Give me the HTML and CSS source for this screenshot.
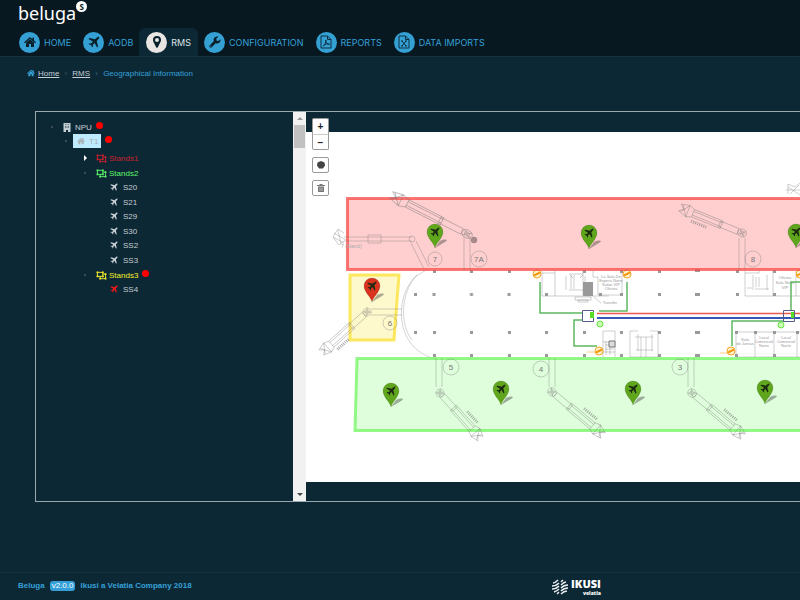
FILE: index.html
```html
<!DOCTYPE html>
<html lang="en">
<head>
    <meta charset="UTF-8">
    <meta name="viewport" content="width=device-width, initial-scale=1.0">
    <title>Beluga - Geographical Information</title>
    <link rel="stylesheet" href="styles.css">
</head>
<body>
    <!-- shared icons -->
    <svg class="defs" width="0" height="0">
        <symbol id="plane" viewBox="0 0 24 24">
            <path d="M20.5 1.5c1.300-.5 2.500.7 2 2-.4 1.500-1.300 2.700-2.300 3.700L17.500 10l2.700 11-2 2-5-8.800-3.700 3.600.5 3.400-1.500 1.500-2.300-4.400-4.900-2.500L2.800 14.300l3.400.5 3.600-3.700L1 6l2-2 11 2.600 2.800-2.800c1-1 2.200-1.900 3.700-2.300z"/>
        </symbol>
        <symbol id="house" viewBox="0 0 24 24">
            <path d="M12 2L0 12.500 1.800 14.300 12 5.500 22.200 14.300 24 12.500 20 9V3h-3v3.400zM12 6.500L4 13.500V22h6v-6h4v6h6v-8.500z"/>
        </symbol>
        <symbol id="group" viewBox="0 0 24 20">
            <path fill="none" stroke="currentColor" stroke-width="2" d="M3 3h12v9H3zM15 7h6v10H9v-5"/>
            <path d="M1 1h4v4H1zM13 1h4v4h-4zM1 10h4v4H1zM13 10h4v4h-4zM19 5h4v4h-4zM19 15h4v4h-4zM7 15h4v4H7z"/>
        </symbol>
        <symbol id="building" viewBox="0 0 16 18">
            <path fill-rule="evenodd" d="M1 0h14v18h-5v-4H6v4H1zM4 3v1h2V3zm3 0v1h2V3zm3 0v1h2V3zM4 6v1h2V6zm3 0v1h2V6zm3 0v1h2V6zM4 9v1h2V9zm3 0v1h2V9zm3 0v1h2V9z"/>
        </symbol>
    </svg>

    <header class="header">
        <a class="logo" href="#">beluga<span class="logo-s">S</span></a>
        <nav class="nav">
            <a href="#" class="nav-item">
                <span class="circle"><svg width="12" height="12"><use href="#house"/></svg></span>HOME
            </a>
            <a href="#" class="nav-item">
                <span class="circle"><svg width="12" height="12"><use href="#plane"/></svg></span>AODB
            </a>
            <a href="#" class="nav-item active">
                <span class="circle"><svg width="8" height="12" viewBox="0 0 14 21"><path fill-rule="evenodd" d="M7 0a7 7 0 0 1 7 7c0 4-3 6-5 12-1 2.600-3 2.600-4 0C3 13 0 11 0 7a7 7 0 0 1 7-7zm0 3.500a3.500 3.500 0 1 0 0 7 3.500 3.500 0 0 0 0-7z"/></svg></span>RMS
            </a>
            <a href="#" class="nav-item">
                <span class="circle"><svg width="12" height="12" viewBox="0 0 24 24"><path fill-rule="evenodd" d="M23 6.500c1 4-2.500 8.500-7 8.500-1 0-1.800-.1-2.600-.5L5.500 22.500c-1.200 1.200-2.800 1-4 0-1-1.200-1.200-2.800 0-4l8-8C8 5.500 11.500 1 16 1c1 0 2 .2 3 .6L14.800 5v4l4 .800zM3.700 19a1.200 1.200 0 1 0 0 2.400 1.200 1.200 0 0 0 0-2.400z"/></svg></span>CONFIGURATION
            </a>
            <a href="#" class="nav-item">
                <span class="circle"><svg class="file" width="12" height="14" viewBox="0 0 12 14"><path d="M1 1h6.500L11 4.500V13H1zM7.500 1v3.500H11M3 11c2-1 3.500-4 2.800-6C5.200 7 7 9.500 9.500 9.200 7.500 8.300 5 9 3 11z"/></svg></span>REPORTS
            </a>
            <a href="#" class="nav-item">
                <span class="circle"><svg class="file" width="12" height="14" viewBox="0 0 12 14"><path d="M1 1h6.500L11 4.500V13H1zM7.500 1v3.500H11M4 6l4 5M8 6l-4 5M3 6h2M7 6h2M3 11h2M7 11h2"/></svg></span>DATA IMPORTS
            </a>
        </nav>
    </header>

    <nav class="breadcrumb">
        <svg width="8" height="8"><use href="#house"/></svg>
        <a href="#">Home</a>
        <span class="sep">›</span>
        <a href="#">RMS</a>
        <span class="sep">›</span>
        <span>Geographical Information</span>
    </nav>

    <main class="panel">
        <div class="tree">
            <ul>
                <li>
                    <div class="node root"><i class="dot"></i><svg width="8" height="9"><use href="#building"/></svg><span>NPU</span><i class="alarm"></i></div>
                    <ul>
                        <li>
                            <div class="node terminal"><i class="dot"></i><span class="selected"><svg width="8" height="8"><use href="#house"/></svg><span>T1</span></span><i class="alarm"></i></div>
                            <ul class="groups">
                                <li>
                                    <div class="node red"><i class="arrow"></i><svg width="11" height="9"><use href="#group"/></svg><span>Stands1</span></div>
                                </li>
                                <li>
                                    <div class="node green"><i class="dot"></i><svg width="11" height="9"><use href="#group"/></svg><span>Stands2</span></div>
                                    <ul class="stands">
                                        <li class="node"><svg width="8" height="8"><use href="#plane"/></svg><span>S20</span></li>
                                        <li class="node"><svg width="8" height="8"><use href="#plane"/></svg><span>S21</span></li>
                                        <li class="node"><svg width="8" height="8"><use href="#plane"/></svg><span>S29</span></li>
                                        <li class="node"><svg width="8" height="8"><use href="#plane"/></svg><span>S30</span></li>
                                        <li class="node"><svg width="8" height="8"><use href="#plane"/></svg><span>SS2</span></li>
                                        <li class="node"><svg width="8" height="8"><use href="#plane"/></svg><span>SS3</span></li>
                                    </ul>
                                </li>
                                <li>
                                    <div class="node yellow"><i class="dot"></i><svg width="11" height="9"><use href="#group"/></svg><span>Stands3</span><i class="alarm"></i></div>
                                    <ul class="stands">
                                        <li class="node"><svg class="busy" width="8" height="8"><use href="#plane"/></svg><span>SS4</span></li>
                                    </ul>
                                </li>
                            </ul>
                        </li>
                    </ul>
                </li>
            </ul>
        </div>

        <div class="scrollbar">
            <i class="up"></i>
            <i class="thumb"></i>
            <i class="down"></i>
        </div>

        <div class="map">
            <div class="controls">
                <div class="zoom">
                    <button type="button">+</button>
                    <button type="button">−</button>
                </div>
                <button type="button" class="tool"><svg width="8" height="8" viewBox="0 0 8 8"><path fill="#444" d="M4 0l3.500 1.500.5 3L6 7.500H2L0 4.500l.5-3z"/></svg></button>
                <button type="button" class="tool"><svg width="8" height="8" viewBox="0 0 8 8"><path fill="#777" d="M0 1h2.500V0h3v1H8v1H0zM1 2.500h6V8H1z"/><path stroke="#fff" stroke-width=".5" d="M3 3.500v3.500M5 3.500v3.500"/></svg></button>
            </div>

            <svg class="plan" viewBox="306 132 494 350" preserveAspectRatio="xMinYMin meet">
                <defs>
                    <!-- boarding bridge, joint at 0,0 and the cabin on the right -->
                    <g id="bridge" class="line">
                        <circle r="4"/><circle r="2"/>
                        <path d="M-3-3L3 3M-3 3L3-3M4-3h18v6H4zM20-4h28v8H20zM20-2h28M20 2h28M48-4l5-2v12l-5-2M53-6l8 3-4 3 4 4-8 2M53-6l6 10M53 6l6-9"/>
                    </g>
                    <g id="arm" class="line">
                        <use href="#bridge"/>
                        <path class="steps" d="M32-8h15"/>
                    </g>
                    <g id="pin">
                        <path class="shadow" d="M0 0L10-6c4-2 1-4-5-1z"/>
                        <path stroke="rgba(0,0,0,.25)" stroke-width=".5" d="M0 0C-1-5-8-10-8-16a8 8 0 0 1 16 0C8-10 1-5 0 0z"/>
                        <use href="#plane" x="-5" y="-21" width="10" height="10" fill="#1c2a12"/>
                    </g>
                    <g id="tag">
                        <circle r="4" fill="#fff3d0" stroke="#f5a623"/>
                        <path stroke="#f39a12" stroke-width="2" d="M-3 1.500L3-1.500"/>
                    </g>
                    <pattern id="pillars" x="431" y="292" width="37.500" height="37.500" patternUnits="userSpaceOnUse">
                        <rect x="1.500" y="1" width="3" height="3" fill="#999"/>
                    </pattern>
                </defs>

                <rect x="306" y="132" width="494" height="350" fill="#fff"/>

                <!-- terminal outline -->
                <g class="line">
                    <path stroke="#888" d="M426 270l-11 7c-18 18-20 58 5 75 6 4 11 6 14 6M417 275c-17 18-17 50-5 65"/>
                    <path d="M542 271v25M555 271v25M542 273h13M542 296h67M569 274h14M569 290h14M566 276v14M585 276v14M571 275v14M574 275v14M583 270v25M593 271v6h5v18M622 271v25M598 295h24M570 275l3 3M583 275l-3 3"/>
                    <path d="M745 271v25h55M745 273h14v-3M773 271v25M796 271v25M753 275v15M756 277v10M759 277v10M767 275v15M747 288h5M755 289h14"/>
                    <path d="M603 331v26M615 331v26M603 331h12M603 342h12M603 352h12M606 341v14M610 341v14M605 345h9M605 349h9M630 331v26h28v-26h-8M630 331h8M635 337h18M641 337v20M646 337v20M636 350h17M638 334v17M652 334v17"/>
                    <path d="M736 332v25M755 332v25M774 332v25M797 332v25M736 332h64M736 357h64"/>
                    <path d="M575 297h16v3h-16zM578 300h10v2h-10zM594 297l7 6"/>
                </g>
                <rect x="583" y="282" width="10" height="14" fill="#999"/>
                <path d="M609 341h6v6h-6z" fill="#ddd" stroke="#777"/>
                <g fill="#999">
                    <path d="M414 293h3v3h-3zM414 331h3v3h-3zM695 293h5v3h-5zM695 331h5v3h-5zM695 354h5v3h-5zM695 269h5v3h-5z"/>
                    <rect x="431" y="292" width="113" height="5" fill="url(#pillars)"/>
                    <path d="M545 293h3v3h-3zM599 293h3v3h-3zM620 293h3v3h-3zM658 293h3v3h-3zM736 293h3v3h-3zM773 293h3v3h-3zM433 331h3v3h-3zM470 331h3v3h-3zM508 331h3v3h-3zM545 331h3v3h-3zM583 331h3v3h-3zM620 331h3v3h-3zM658 331h3v3h-3zM735 331h3v3h-3zM754 331h3v3h-3zM773 331h3v3h-3zM796 331h3v3h-3z"/>
                    <path d="M433 354h3v3h-3zM470 354h3v3h-3zM508 354h3v3h-3zM545 354h3v3h-3zM583 354h3v3h-3zM620 354h3v3h-3zM658 354h3v3h-3zM735 354h3v3h-3zM773 354h3v3h-3zM433 270h3v3h-3zM470 270h3v3h-3zM508 270h3v3h-3zM583 270h3v3h-3zM620 270h3v3h-3zM658 270h3v3h-3zM736 270h3v3h-3zM773 270h3v3h-3z"/>
                </g>
                <g class="small">
                    <text x="611" y="278">La Sala De</text><text x="611" y="282">Espera Norte</text><text x="611" y="286">Salon VIP</text><text x="611" y="290">Oficina</text>
                    <text x="610" y="304">Transfer</text>
                    <text x="785" y="279">Oficina</text><text x="785" y="284">Sala Norte</text><text x="785" y="289">VIP</text>
                    <text x="745" y="341">Sala</text><text x="745" y="345">de Juntas</text>
                    <text x="764" y="339">Local</text><text x="764" y="343">Comercial</text><text x="764" y="347">Norte</text>
                    <text x="786" y="339">Local</text><text x="786" y="343">Comercial</text><text x="786" y="347">Norte</text>
                </g>

                <!-- network cables -->
                <g fill="none" stroke="#5cb860" stroke-width="1.500">
                    <path d="M540 282v31h42M627 282v29h-28M582 320h-8v26h23M791 311v-29h9M732 346v-25h52"/>
                </g>
                <path stroke="#ee5a50" stroke-width="1.500" d="M597 313.500h203"/>
                <path stroke="#3558b8" stroke-width="2" d="M597 318h203"/>
                <path fill="none" stroke="#555e88" d="M582.500 310.500h11v11h-11zM783.500 310.500h11v11h-11z"/>
                <path fill="#57dd25" d="M590 312h4v6h-4zM791 312h3v6h-3z"/>
                <g fill="#caffb0" stroke="#65e545"><circle cx="600" cy="324" r="3"/><circle cx="781" cy="325" r="3"/></g>
                <use href="#tag" x="537" y="274"/><use href="#tag" x="627" y="274"/><use href="#tag" x="800" y="274"/>
                <use href="#tag" x="599" y="351"/><use href="#tag" x="731" y="351"/>
                <path stroke="#f9cf80" d="M587 352h8M720 353h7"/>

                <!-- stand areas -->
                <path class="area red-area" d="M347.500 198.500H900v71H347.500z"/>
                <path class="area yellow-area" d="M350 275h49l-5 65h-44z"/>
                <path class="area green-area" d="M357 358.500h543v72H355z"/>

                <!-- boarding bridges -->
                <g class="line">
                    <path d="M344 237h68M344 241h68M368 235h13v8h-13zM411 243l13 26M416 241l13 26M464 236v34M470 236v34M739 238v32M745 238v32M371 309h31M371 315h31M436 358v29M442 358v29M549 358v29M555 358v29M688 358v29M694 358v29"/>
                    <path d="M344 233l-6-4-5 8 6 8 5-4M333 237l11 6M338 230l3 14M334 233l12 7"/>
                    <circle cx="474" cy="240" r="3" fill="#a98989"/>
                    <path d="M788 194v-10l7 3 5-4M788 187l12 8M790 194l9-9M786 190h14"/>
                    <circle cx="435" cy="259" r="7"/><circle cx="479" cy="259" r="8"/><circle cx="753" cy="259" r="8"/><circle cx="390" cy="323" r="7"/>
                    <circle cx="451" cy="367" r="8"/><circle cx="541" cy="369" r="8"/><circle cx="680" cy="367" r="8"/>
                </g>
                <circle cx="412" cy="239" r="3" class="line"/>
                <use href="#bridge" transform="translate(467 234) rotate(207) scale(1.400 1)"/>
                <use href="#arm" transform="translate(742 233) rotate(202) scale(1.100 1)"/>
                <use href="#arm" transform="translate(367 312) rotate(138)"/>
                <use href="#arm" transform="translate(440 393) rotate(48)"/>
                <use href="#arm" transform="translate(552 392) rotate(40) scale(1.100 1)"/>
                <use href="#arm" transform="translate(692 393) rotate(40) scale(1.100 1)"/>
                <g class="number">
                    <text x="435" y="262">7</text><text x="479" y="262">7A</text><text x="753" y="262">8</text><text x="390" y="326">6</text>
                    <text x="451" y="370">5</text><text x="541" y="372">4</text><text x="680" y="370">3</text>
                </g>
                <text class="stand-name" x="341" y="248">7 (Stand)</text>

                <!-- aircraft on stand -->
                <g fill="#5fa61d">
                    <use href="#pin" x="435" y="248"/><use href="#pin" x="589" y="249"/><use href="#pin" x="796" y="248"/>
                    <use href="#pin" x="391" y="407"/><use href="#pin" x="501" y="405"/><use href="#pin" x="633" y="405"/><use href="#pin" x="765" y="404"/>
                </g>
                <use href="#pin" x="372" y="302" fill="#d8331f"/>
            </svg>
        </div>
    </main>

    <footer class="footer">
        <div class="about"><span>Beluga</span><span class="version">v2.0.0</span><span>Ikusi a Velatia Company 2018</span></div>
        <div class="ikusi">
            <svg width="16" height="16" viewBox="0 0 16 16"><g fill="none" stroke="#e8eef0" stroke-width="1.500"><path d="M6 1Q3 4 1 4M7 4Q4 7 0 7M7 7Q4 10 0 10M7 10Q5 12 2 13M7 13L5 15M9 3l2-2M9 6q3-3 5-3M9 9q3-3 7-3M9 12q3-3 7-3M9 15q3-3 6-3"/></g></svg>
            <div class="brand"><span>IKUSI</span><small>velatia</small></div>
        </div>
    </footer>
</body>
</html>
```
FILE: styles.css
```css
body {
    display: flex;
    flex-direction: column;
    min-height: 100vh;
    margin: 0;
    overflow-x: hidden;
    background-color: #0d2835;
    color: #c5ced2;
    font-family: "Liberation Sans", Arial, sans-serif;
    font-size: 8px;
}

* {
    box-sizing: border-box;
}

ul {
    list-style: none;
    margin: 0;
    padding: 0;
}

svg {
    fill: currentColor;
    flex-shrink: 0;
}

.defs {
    position: absolute;
}

/* header */
.header {
    height: 57px;
    padding: 0 13px;
    background-color: #071821;
    border-bottom: 1px solid #153240;
}

.logo {
    display: flex;
    height: 28px;
    padding-left: 5px;
    color: #fff;
    font-family: "Noto Sans", sans-serif;
    font-size: 18px;
    line-height: 26px;
    text-decoration: none;
}

.logo-s {
    width: 11px;
    height: 11px;
    margin-top: 1px;
    border-radius: 50%;
    background-color: #fff;
    color: #071821;
    font-size: 8px;
    font-weight: bold;
    line-height: 11px;
    text-align: center;
}

.nav {
    display: flex;
    height: 28px;
}

.nav-item {
    display: flex;
    align-items: center;
    gap: 4px;
    padding: 0 6px;
    color: #35a0d8;
    font-family: Inter, sans-serif;
    font-size: 9px;
    white-space: nowrap;
    text-decoration: none;
}

.nav-item.active {
    padding: 0 7px;
    border-radius: 6px 6px 0 0;
    background-color: #0d2835;
    color: #dfe5e8;
}

.circle {
    display: flex;
    align-items: center;
    justify-content: center;
    width: 21px;
    height: 21px;
    border-radius: 50%;
    background-color: #35a0d3;
    color: #0a202b;
}

.active .circle {
    background-color: #e9e5e3;
}

.file {
    fill: none;
    stroke: #0d2e40;
}

/* breadcrumb */
.breadcrumb {
    display: flex;
    align-items: center;
    height: 32px;
    padding-left: 27px;
    color: #35a0d8;
}

.breadcrumb a {
    margin-left: 3px;
    color: #c5ced2;
}

.sep {
    width: 7px;
    margin-left: 3px;
    color: #3e6275;
    text-align: center;
}

.sep + span {
    margin-left: 3px;
}

/* panel */
.panel {
    display: flex;
    height: 391px;
    margin: 22px 0 0 35px;
    border: 1px solid #9ba8ae;
    border-right: none;
}

.tree {
    width: 257px;
    padding: 8px 0 0 13px;
}

.node {
    display: flex;
    align-items: center;
    height: 14px;
}

.node > svg {
    margin-right: 4px;
}

.dot {
    width: 2px;
    height: 2px;
    margin: 0 10px 0 2px;
    background-color: #3c4b52;
}

.arrow {
    width: 3px;
    margin-right: 9px;
    margin-left: 2px;
    border: 3px solid transparent;
    border-left-color: #fff;
    border-right: none;
}

.tree ul ul {
    padding-left: 12px;
}

.tree .groups {
    padding: 3px 0 0 21px;
}

.groups > li + li {
    padding-top: 1px;
}

.tree .stands {
    padding-left: 28px;
}

.stands .node:nth-child(even) {
    margin-top: 1px;
}

.terminal .dot {
    margin: 0 6px 0 4px;
}

.groups .node svg {
    margin-right: 2px;
}

.groups .stands svg {
    margin-right: 5px;
}

.selected {
    display: flex;
    align-items: center;
    gap: 4px;
    height: 14px;
    padding: 0 3px 0 4px;
    background-color: #beebff;
    color: #a8b0b2;
}

.alarm {
    align-self: flex-start;
    width: 7px;
    height: 7px;
    margin-top: 2px;
    margin-left: 4px;
    border-radius: 50%;
    background-color: #f00;
}

.red {
    color: #c8222c;
}

.green {
    color: #5bf56a;
}

.yellow {
    color: #f4f02a;
}

.busy {
    color: #f01818;
}

.scrollbar {
    display: flex;
    flex-direction: column;
    align-items: center;
    width: 13px;
    background-color: #f1f1f1;
}

.up,
.down {
    margin: 5px 0;
    border: 3px solid transparent;
    border-top: none;
    border-bottom-color: #999;
}

.down {
    margin-top: auto;
    border-top: 3px solid #444;
    border-bottom: none;
}

.thumb {
    width: 11px;
    height: 23px;
    background-color: #c1c1c1;
}

/* map */
.map {
    position: relative;
    flex: 1;
    min-width: 0;
    padding: 20px 0 19px;
    overflow: hidden;
}

.plan {
    display: block;
    width: 100%;
    height: 350px;
    background-color: #fff;
}

.controls {
    position: absolute;
    top: 6px;
    left: 6px;
    display: flex;
    flex-direction: column;
    gap: 7px;
}

.controls button {
    display: flex;
    align-items: center;
    justify-content: center;
    width: 17px;
    height: 16px;
    padding: 0;
    border: 1px solid #999;
    border-radius: 2px;
    background-color: #fff;
    color: #222;
    font: bold 10px "Liberation Sans", Arial, sans-serif;
}

.controls .zoom button {
    border-bottom: none;
    border-radius: 2px 2px 0 0;
}

.controls .zoom button + button {
    border-top-color: #ccc;
    border-bottom: 1px solid #999;
    border-radius: 0 0 2px 2px;
}

.line {
    fill: none;
    stroke: #777;
    stroke-opacity: 0.6;
    stroke-width: 0.6;
}

.steps {
    stroke-width: 3;
    stroke-dasharray: 1 1;
}

.area {
    stroke-width: 3;
    fill-opacity: 0.2;
    stroke-opacity: 0.75;
}

.red-area {
    fill: #ff1010;
    stroke: #fa4a44;
}

.yellow-area {
    fill: #f8e000;
    stroke: #fbe030;
}

.green-area {
    fill: #60ff50;
    stroke: #72f560;
}

.shadow {
    fill: #333;
    fill-opacity: 0.4;
}

.number {
    fill: #777;
    font-size: 8px;
    text-anchor: middle;
}

.small {
    fill: #999;
    font-size: 4px;
    text-anchor: middle;
}

.stand-name {
    fill: #aaa;
    font-size: 5px;
}

/* footer */
.footer {
    display: grid;
    grid-template-columns: 69% 1fr;
    align-items: center;
    height: 28px;
    margin-top: auto;
    border-top: 1px solid #123342;
    color: #35a0d8;
    font-weight: bold;
}

.about {
    display: flex;
    align-items: center;
    gap: 5px;
    padding-left: 18px;
    padding-bottom: 2px;
}

.version {
    height: 10px;
    padding: 0 2px;
    border-radius: 3px;
    background-color: #35a0d8;
    color: #fff;
    font-weight: normal;
    line-height: 10px;
}

.ikusi {
    display: flex;
    align-items: center;
    gap: 3px;
    color: #fff;
}

.brand {
    display: flex;
    flex-direction: column;
    align-items: flex-end;
    font-family: "Open Sans", sans-serif;
    font-size: 11px;
    font-weight: 800;
    line-height: 12px;
}

.brand small {
    font-size: 5px;
    line-height: 6px;
}
```
